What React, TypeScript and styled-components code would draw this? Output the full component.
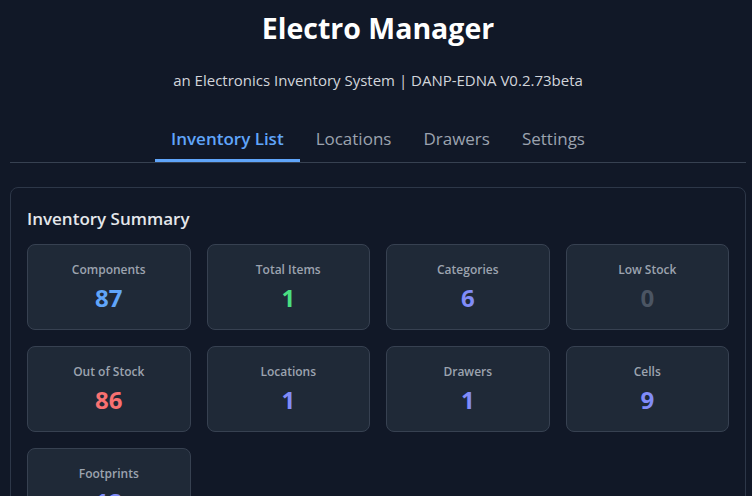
import React from 'react';
import styled, { createGlobalStyle } from 'styled-components';

type Stat = {
  label: string;
  value: number;
  color: string;
};

const stats: Stat[] = [
  { label: 'Components', value: 87, color: '#60a5fa' },
  { label: 'Total Items', value: 1, color: '#4ade80' },
  { label: 'Categories', value: 6, color: '#818cf8' },
  { label: 'Low Stock', value: 0, color: '#4b5563' },
  { label: 'Out of Stock', value: 86, color: '#f87171' },
  { label: 'Locations', value: 1, color: '#818cf8' },
  { label: 'Drawers', value: 1, color: '#818cf8' },
  { label: 'Cells', value: 9, color: '#818cf8' },
  { label: 'Footprints', value: 12, color: '#818cf8' },
];

const tabs = ['Inventory List', 'Locations', 'Drawers', 'Settings'];

const App: React.FC = () => {
  return (
    <>
      <GlobalStyle />
      <Page>
        <Title>Electro Manager</Title>
        <Subtitle>an Electronics Inventory System | DANP-EDNA V0.2.73beta</Subtitle>

        <TabBar>
          {tabs.map((tab, i) => (
            <Tab key={tab} active={i === 0}>
              {tab}
            </Tab>
          ))}
        </TabBar>

        <Panel>
          <PanelTitle>Inventory Summary</PanelTitle>
          <StatGrid>
            {stats.map((stat) => (
              <StatCard key={stat.label}>
                <StatLabel>{stat.label}</StatLabel>
                <StatValue color={stat.color}>{stat.value}</StatValue>
              </StatCard>
            ))}
          </StatGrid>
        </Panel>
      </Page>
    </>
  );
};

export default App;

const GlobalStyle = createGlobalStyle`
  html, body {
    margin: 0;
    padding: 0;
    background: #111827;
    overflow: hidden;
  }

  body {
    font-family: 'Open Sans', 'Noto Sans', sans-serif;
    color: #e5e7eb;
  }

  * {
    box-sizing: border-box;
  }
`;

const Page = styled.div`
  min-height: 100vh;
  padding: 10px 6px 24px 10px;
`;

const Title = styled.h1`
  margin: 0;
  font-size: 28.5px;
  line-height: 36px;
  font-weight: 700;
  color: #ffffff;
  text-align: center;
`;

const Subtitle = styled.p`
  margin: 22px 0 0;
  font-size: 15px;
  line-height: 24px;
  color: #d1d5db;
  text-align: center;
`;

const TabBar = styled.nav`
  display: flex;
  justify-content: center;
  margin-top: 23px;
  border-bottom: 1px solid #374151;
`;

const Tab = styled.button<{ active?: boolean }>`
  font-family: inherit;
  font-size: 17px;
  line-height: 28px;
  padding: 10px 16px 6px;
  background: none;
  border: none;
  border-bottom: 3px solid ${(p) => (p.active ? '#60a5fa' : 'transparent')};
  color: ${(p) => (p.active ? '#60a5fa' : '#9ca3af')};
  font-weight: ${(p) => (p.active ? 600 : 400)};
  cursor: pointer;
`;

const Panel = styled.section`
  margin-top: 24px;
  padding: 17px 16px 16px;
  border: 1px solid #2d3748;
  border-radius: 8px;
  background: #111827;
`;

const PanelTitle = styled.h2`
  margin: 0 0 11px;
  font-size: 17px;
  line-height: 28px;
  font-weight: 600;
  color: #e5e7eb;
`;

const StatGrid = styled.div`
  display: grid;
  grid-template-columns: repeat(4, 1fr);
  gap: 16px;
`;

const StatCard = styled.div`
  display: flex;
  flex-direction: column;
  align-items: center;
  padding: 17px 16px 15px;
  background: #1f2937;
  border: 1px solid #374151;
  border-radius: 8px;
`;

const StatLabel = styled.div`
  font-size: 12px;
  line-height: 16px;
  font-weight: 600;
  color: #9ca3af;
`;

const StatValue = styled.div<{ color: string }>`
  margin-top: 4px;
  font-size: 24px;
  line-height: 32px;
  font-weight: 700;
  color: ${(p) => p.color};
`;
